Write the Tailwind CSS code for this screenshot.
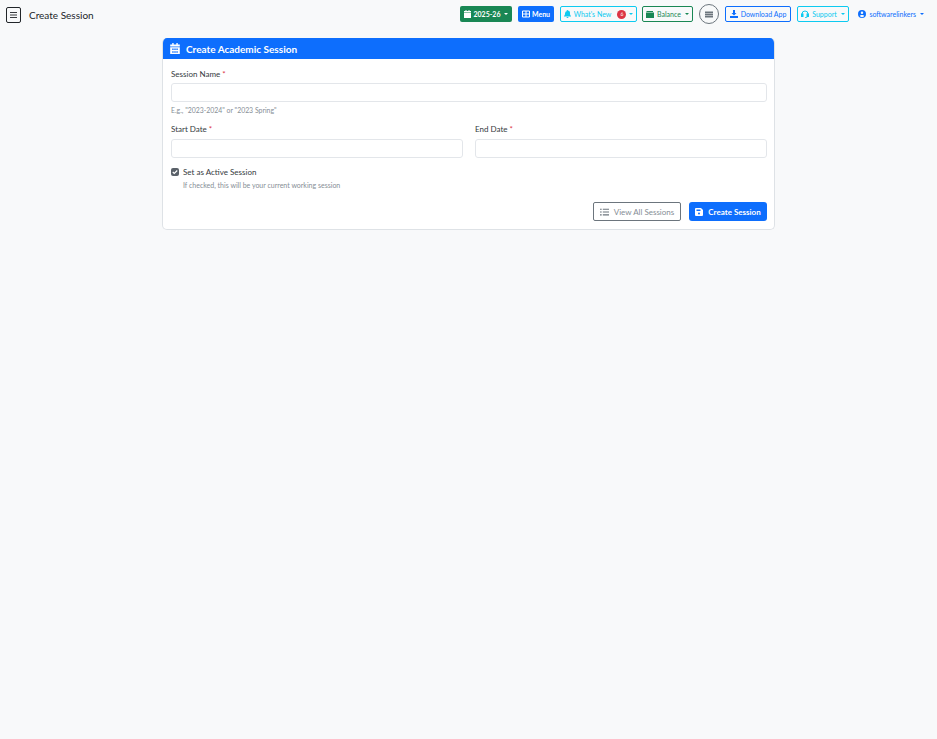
<!DOCTYPE html>
<html lang="en">
<head>
    <meta charset="UTF-8">
    <title>Create Session</title>
    <script src="https://cdn.jsdelivr.net/npm/@tailwindcss/browser@4"></script>
</head>
<body class="min-h-screen bg-[#f8f9fa] font-['Lato',sans-serif] text-[#212529]">
    <!-- top bar -->
    <nav class="flex items-center h-[28px] pl-[6px] pr-[13px]">
        <button class="mt-[2px] flex items-center justify-center w-[15px] h-[16px] border border-[#212529] rounded-[2px]">
            <svg width="7" height="6" viewBox="0 0 7 6" fill="none" stroke="#212529" stroke-width="0.9"><path d="M0 .5h7M0 3h7M0 5.500h7"/></svg>
        </button>
        <span class="mt-[2px] ml-[8px] text-[10px] leading-none">Create Session</span>

        <div class="ml-auto flex items-center text-[7px] leading-none">
            <button class="flex items-center justify-center w-[52px] h-[16px] gap-[3px] bg-[#198754] text-white rounded-[2px] font-bold">
                <svg width="7" height="8" viewBox="0 0 14 16" fill="currentColor"><path d="M3 0h2v2h4V0h2v2h3v3H0V2h3zM0 6h14v10H0z"/></svg>
                2025-26
                <span class="ml-[1px] border-x-[2px] border-t-[2px] border-x-transparent border-t-white"></span>
            </button>
            <button class="ml-[6px] flex items-center justify-center w-[36px] h-[16px] gap-[2px] bg-[#0d6efd] text-white rounded-[2px] font-bold">
                <svg width="8" height="8" viewBox="0 0 16 16" fill="none" stroke="currentColor" stroke-width="2"><path d="M1 2h14v12H1zM1 8h14M8 2v12"/></svg>
                Menu
            </button>
            <button class="ml-[6px] flex items-center justify-center w-[77px] h-[16px] gap-[3px] border border-[#0dcaf0] text-[#0dcaf0] rounded-[2px]">
                <svg width="7" height="8" viewBox="0 0 14 16" fill="currentColor"><path d="M7 0a1 1 0 0 1 1 1.200A5 5 0 0 1 12 7c0 3 1 4 2 5v1H0v-1c1-1 2-2 2-5a5 5 0 0 1 4-4.800A1 1 0 0 1 7 0zM5 14h4a2 2 0 0 1-4 0z"/></svg>
                What's New
                <span class="ml-[3px] flex items-center justify-center w-[9px] h-[9px] rounded-full bg-[#dc3545] text-white text-[5px]">6</span>
                <span class="border-x-[2px] border-t-[2px] border-x-transparent border-t-[#0dcaf0]"></span>
            </button>
            <button class="ml-[5px] flex items-center justify-center w-[51px] h-[16px] gap-[3px] border border-[#198754] text-[#198754] rounded-[2px]">
                <svg width="8" height="7" viewBox="0 0 16 14" fill="currentColor"><path d="M1 0h13v2H1zM0 3h16v11H0z"/></svg>
                Balance
                <span class="ml-[1px] border-x-[2px] border-t-[2px] border-x-transparent border-t-[#198754]"></span>
            </button>
            <button class="ml-[6px] flex items-center justify-center w-[20px] h-[20px] border border-[#6c757d] rounded-full">
                <svg width="8" height="7" viewBox="0 0 16 14" fill="#6c757d"><path d="M0 1h16v12H0z"/><path d="M0 5h16M0 9h16" stroke="#fff" stroke-width="1"/></svg>
            </button>
            <button class="ml-[6px] flex items-center justify-center w-[66px] h-[16px] gap-[3px] border border-[#0d6efd] text-[#0d6efd] rounded-[2px]">
                <svg width="8" height="8" viewBox="0 0 16 16" fill="currentColor"><path d="M6 0h4v6h3l-5 5-5-5h3zM0 12h16v4H0z"/></svg>
                Download App
            </button>
            <button class="ml-[6px] flex items-center justify-center w-[52px] h-[16px] gap-[3px] border border-[#0dcaf0] text-[#0dcaf0] rounded-[2px]">
                <svg width="8" height="8" viewBox="0 0 16 16" fill="none" stroke="currentColor" stroke-width="2"><path d="M2 10V8a6 6 0 0 1 12 0v2"/><rect x="1" y="8" width="3" height="5" fill="currentColor"/><rect x="12" y="8" width="3" height="5" fill="currentColor"/><path d="M13 13c0 2-3 2-5 2"/></svg>
                Support
                <span class="ml-[1px] border-x-[2px] border-t-[2px] border-x-transparent border-t-[#0dcaf0]"></span>
            </button>
            <button class="ml-[9px] flex items-center justify-end w-[66px] gap-[3px] text-[#0d6efd]">
                <svg width="8" height="8" viewBox="0 0 16 16" fill="currentColor"><path fill-rule="evenodd" d="M8 0a8 8 0 1 1 0 16A8 8 0 0 1 8 0zm0 3a2.500 2.500 0 1 0 0 5 2.500 2.500 0 0 0 0-5zM3.500 12c1 1.500 2.700 2.300 4.500 2.300s3.500-.8 4.500-2.300C12 10.500 10 10 8 10s-4 .5-4.500 2z"/></svg>
                softwarelinkers
                <span class="ml-[1px] border-x-[2px] border-t-[2px] border-x-transparent border-t-[#0d6efd]"></span>
            </button>
        </div>
    </nav>

    <!-- card -->
    <main class="mt-[10px] mx-auto w-[613px] bg-white border border-t-0 border-[#dee2e6] rounded-[5px] overflow-hidden">
        <div class="flex items-center h-[21px] px-[7px] gap-[6px] bg-[#0d6efd] text-white">
            <svg width="10" height="11" viewBox="0 0 14 16" fill="currentColor"><path d="M3 0h2v2h4V0h2v2h3v3H0V2h3zM0 6h14v10H0z"/><path d="M3 8h2v2H3zM6 8h2v2H6zM9 8h2v2H9zM3 12h2v2H3zM6 12h2v2H6zM9 12h2v2H9z" fill="#0d6efd"/></svg>
            <h1 class="text-[10px] font-bold leading-none">Create Academic Session</h1>
        </div>

        <form class="pl-[8px] pr-[7px] pt-[10px] pb-[8px]">
            <label class="block text-[8px] leading-[10px] text-[#343a40]">Session Name <span class="text-[#dc3545]">*</span></label>
            <input type="text" class="block mt-[4px] w-full h-[19px] border border-[#e3e6ea] rounded-[3px]">
            <p class="mt-[4px] text-[6.900px] leading-[9px] text-[#868e96]">E.g., "2023-2024" or "2023 Spring"</p>

            <div class="mt-[9px] grid grid-cols-2 gap-[12px]">
                <div>
                    <label class="block text-[8px] leading-[10px] text-[#343a40]">Start Date <span class="text-[#dc3545]">*</span></label>
                    <input type="text" class="block mt-[5px] w-full h-[19px] border border-[#e3e6ea] rounded-[3px]">
                </div>
                <div>
                    <label class="block text-[8px] leading-[10px] text-[#343a40]">End Date <span class="text-[#dc3545]">*</span></label>
                    <input type="text" class="block mt-[5px] w-full h-[19px] border border-[#e3e6ea] rounded-[3px]">
                </div>
            </div>

            <div class="mt-[9px] flex items-center gap-[4px]">
                <span class="flex items-center justify-center w-[8px] h-[8px] rounded-[2px] bg-[#5a6169]">
                    <svg width="6" height="6" viewBox="0 0 16 16" fill="none" stroke="#fff" stroke-width="3"><path d="M2 8l4 4 8-8"/></svg>
                </span>
                <span class="text-[8px] leading-[10px] text-[#343a40]">Set as Active Session</span>
            </div>
            <p class="mt-[4px] ml-[12px] text-[7px] leading-[9px] text-[#868e96]">If checked, this will be your current working session</p>

            <div class="mt-[12px] flex justify-end gap-[8px]">
                <button type="button" class="flex items-center justify-center w-[88px] h-[19px] gap-[5px] border border-[#6c757d] rounded-[2px] text-[#868e96] text-[8px]">
                    <svg width="9" height="8" viewBox="0 0 16 14" fill="none" stroke="#6c757d" stroke-width="2"><path d="M5 2h11M5 7h11M5 12h11M0 2h3M0 7h3M0 12h3"/></svg>
                    View All Sessions
                </button>
                <button type="button" class="flex items-center justify-center w-[78px] h-[19px] gap-[5px] bg-[#0d6efd] rounded-[3px] text-white text-[8px] font-bold">
                    <svg width="8" height="8" viewBox="0 0 16 16" fill="currentColor"><path fill-rule="evenodd" d="M2 0h10l4 4v10a2 2 0 0 1-2 2H2a2 2 0 0 1-2-2V2a2 2 0 0 1 2-2zm1 3v3h8V3zm5 6a2 2 0 1 0 0 4 2 2 0 0 0 0-4z"/></svg>
                    Create Session
                </button>
            </div>
        </form>
    </main>
</body>
</html>
